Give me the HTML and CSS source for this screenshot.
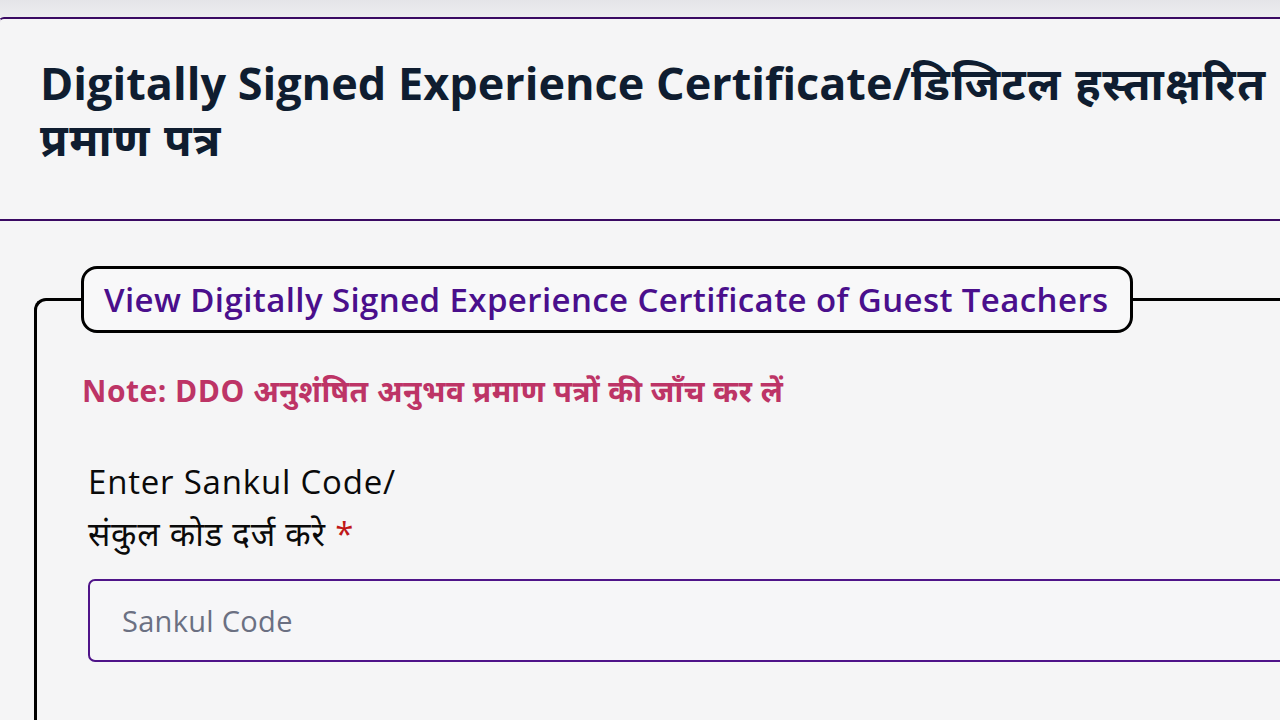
FILE: index.html
```html
<!DOCTYPE html>
<html lang="hi">
<head>
<meta charset="utf-8">
<title>Digitally Signed Experience Certificate</title>
<link rel="stylesheet" href="styles.css">
</head>
<body>
<div class="topband"></div>
<main class="card">
  <header class="card-head">
    <h1 class="title">Digitally Signed Experience Certificate/<span class="hi">डिजिटल हस्ताक्षरित</span><br><span class="hi">प्रमाण पत्र</span></h1>
  </header>
  <section class="card-body">
    <fieldset class="group">
      <legend class="legend">View Digitally Signed Experience Certificate of Guest Teachers</legend>
      <div class="group-content">
        <p class="note">Note: DDO अनुशंषित अनुभव प्रमाण पत्रों की जाँच कर लें</p>
        <label class="label" for="sankul">
          <span class="label-en">Enter Sankul Code/</span>
          <span class="label-hi">संकुल कोड दर्ज करे <span class="req">*</span></span>
        </label>
        <input class="input" id="sankul" type="text" placeholder="Sankul Code">
      </div>
    </fieldset>
  </section>
</main>
</body>
</html>
```

FILE: styles.css
```css
html, body {
  margin: 0;
  padding: 0;
  background: #f5f5f6;
  overflow: hidden;
  width: 1280px;
  height: 720px;
}
body {
  font-family: "Open Sans", "Noto Sans Devanagari", "Lohit Devanagari", "FreeSans", sans-serif;
}
.topband {
  height: 17px;
  background: linear-gradient(#e4e4e8, #ededf0);
}
.card {
  width: 1400px;
  margin-left: -2px;
  border-top: 2px solid #3a0a63;
  border-left: 2px solid #d8d0e0;
  border-top-left-radius: 6px;
  background: #f5f5f6;
}
.card-head {
  height: 202px;
  box-sizing: border-box;
  padding: 36px 0 0 40px;
  border-bottom: 2px solid #3a0a63;
}
.title {
  margin: 0;
  font-size: 45px;
  line-height: 56px;
  font-weight: 700;
  color: #0f1d30;
  white-space: nowrap;
}
.title .hi {
  letter-spacing: 1.5px;
}
.card-body {
  padding: 45px 0 0 34px;
}
.group {
  margin: 0;
  padding: 0;
  border: 3px solid #000;
  border-right: none;
  border-top-left-radius: 12px;
  min-height: 500px;
  box-sizing: border-box;
}
.legend {
  margin-left: 44px;
  padding: 12px 21px 12px 20px;
  border: 3px solid #000;
  border-radius: 16px;
  background: #f8f8f9;
  font-size: 33px;
  line-height: 37px;
  letter-spacing: 0.4px;
  font-weight: 600;
  color: #4a0f8c;
}
.group-content {
  padding-left: 51px;
}
.note {
  margin: 38px 0 0 -6px;
  font-size: 30px;
  line-height: 40px;
  letter-spacing: 0.5px;
  font-weight: 700;
  color: #bd3466;
}
.label {
  display: flex;
  flex-direction: column;
  margin-top: 45px;
  color: #0a0a0a;
  font-size: 33px;
  line-height: 52px;
  letter-spacing: 0.8px;
}
.label-en {
  font-weight: 500;
}
.label-hi {
  font-weight: 400;
}
.req {
  color: #c01818;
}
.input {
  display: block;
  margin-top: 19px;
  width: 1400px;
  height: 83px;
  box-sizing: border-box;
  padding: 0 32px;
  border: 2px solid #4f1489;
  border-radius: 7px;
  background: #f6f6f8;
  font-family: inherit;
  font-size: 29px;
  letter-spacing: 0.3px;
  color: #333;
}
.input::placeholder {
  color: #6b7082;
}
```
